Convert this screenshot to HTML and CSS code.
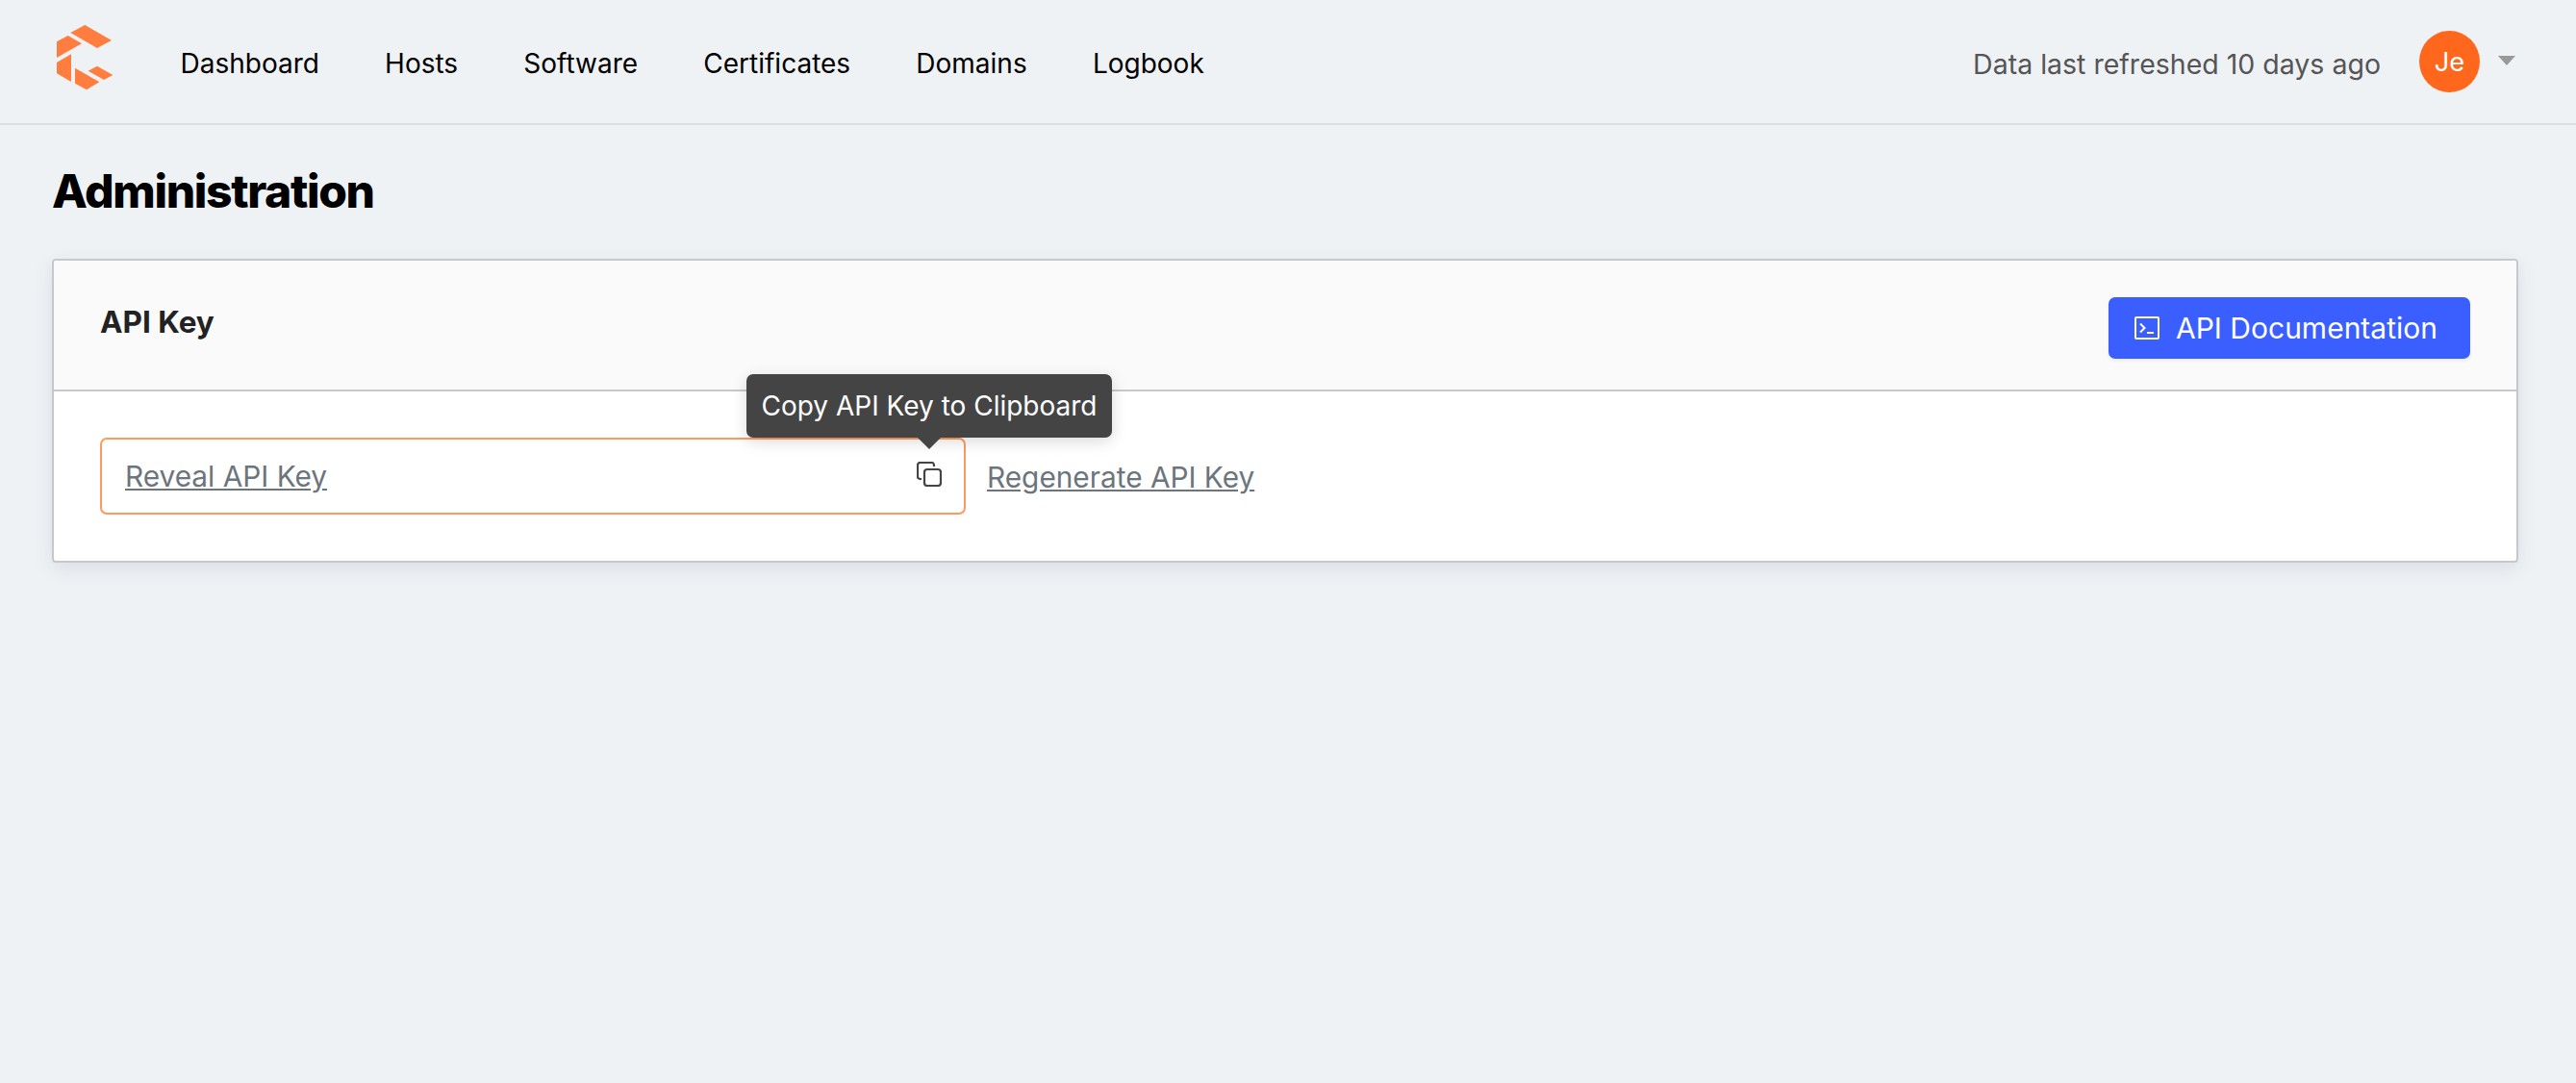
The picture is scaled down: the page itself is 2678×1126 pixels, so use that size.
FILE: index.html
```html
<!DOCTYPE html>
<html lang="en">
<head>
<meta charset="utf-8">
<title>Administration</title>
<link rel="stylesheet" href="styles.css">
</head>
<body>
<header class="topbar">
  <svg class="logo" viewBox="0 0 58.5 68" aria-hidden="true">
    <polygon points="29.3,0 57,16 42,24 14.3,8"/>
    <polygon points="0,17.3 11.7,11 26,19.3 0,34"/>
    <polygon points="15,30.3 15,59 0,50.3 0,39"/>
    <polygon points="19,44.7 44.3,59.3 31,67.3 19,60.7"/>
    <polygon points="42,42.7 58.3,52 49,57 32.7,47.7"/>
  </svg>
  <nav class="nav">
    <a class="nav-link">Dashboard</a>
    <a class="nav-link">Hosts</a>
    <a class="nav-link">Software</a>
    <a class="nav-link">Certificates</a>
    <a class="nav-link">Domains</a>
    <a class="nav-link">Logbook</a>
  </nav>
  <div class="status">
    <span class="refreshed">Data last refreshed 10 days ago</span>
    <span class="avatar">Je</span>
    <span class="caret"></span>
  </div>
</header>
<main class="page">
  <h1 class="page-title">Administration</h1>
  <section class="card">
    <div class="card-head">
      <h2 class="card-title">API Key</h2>
      <a class="btn">
        <svg class="btn-icon" viewBox="0 0 26 24" aria-hidden="true">
          <rect x="1" y="1" width="24" height="22" rx="1" fill="none" stroke="#fff" stroke-width="2"/>
          <path d="M6 7.5l4.500 4.500L6 16.500" fill="none" stroke="#fff" stroke-width="2"/>
          <path d="M13 17h7" fill="none" stroke="#fff" stroke-width="2"/>
        </svg>
        API Documentation
      </a>
    </div>
    <div class="card-body">
      <div class="key-field">
        <a class="link">Reveal API Key</a>
        <svg class="copy-icon" viewBox="0 0 26 26" aria-hidden="true">
          <rect x="8" y="8" width="17" height="17" rx="3" fill="none" stroke="#444" stroke-width="2.200"/>
          <path d="M5 18H3.500A2.500 2.500 0 0 1 1 15.500V3.500A2.500 2.500 0 0 1 3.500 1H15.500A2.500 2.500 0 0 1 18 3.500V5" fill="none" stroke="#444" stroke-width="2.200"/>
        </svg>
        <div class="tooltip">Copy API Key to Clipboard</div>
      </div>
      <a class="link link-side">Regenerate API Key</a>
    </div>
  </section>
</main>
</body>
</html>
```
FILE: styles.css
```css
* { box-sizing: border-box; }
html, body { margin: 0; height: 100%; }
body {
  background: #eff2f5;
  font-family: Inter, "Liberation Sans", sans-serif;
  font-size: 28px;
  color: #000;
  overflow: hidden;
}
.topbar {
  display: flex;
  align-items: center;
  height: 130px;
  padding: 0 63px 0 59px;
  border-bottom: 2px solid #dcdddf;
}
.logo { width: 58.5px; height: 68px; fill: #ff7d3f; flex: none; margin-top: -8px; }
.nav { display: flex; gap: 68.2px; margin-left: 70px; }
.nav-link { color: #000; line-height: 1; margin-top: 4px; }
.status { display: flex; align-items: center; margin-left: auto; }
.refreshed { color: #555; margin-top: 4px; font-size: 28.5px; }
.avatar {
  display: flex;
  align-items: center;
  justify-content: center;
  width: 63px;
  height: 64px;
  margin-left: 40px;
  border-radius: 50%;
  background: #ff671d;
  color: #fff;
  font-size: 27.3px;
}
.caret {
  width: 0;
  height: 0;
  margin: -3px 0 0 19px;
  border-left: 9px solid transparent;
  border-right: 9px solid transparent;
  border-top: 10px solid #999;
}
.page { padding: 0 60px 0 54px; }
.page-title {
  margin: 0;
  padding-top: 40px;
  height: 141px;
  font-size: 48px;
  line-height: 58px;
  font-weight: 800;
  letter-spacing: -1.35px;
}
.card {
  border: 2px solid #c5c8cc;
  border-radius: 4px;
  background: #fff;
  box-shadow: 0 6px 20px rgba(40, 50, 70, 0.1);
  margin-top: -2px;
}
.card-head {
  display: flex;
  justify-content: space-between;
  align-items: flex-start;
  height: 136px;
  padding: 38px 48px 0 48px;
  background: #fafafa;
  border-bottom: 2px solid #c5c8cc;
  border-radius: 2px 2px 0 0;
}
.card-title {
  margin: 0;
  padding-top: 9px;
  font-size: 31.500px;
  line-height: 34px;
  font-weight: 700;
  color: #222;
}
.btn {
  display: flex;
  align-items: center;
  gap: 17px;
  width: 376px;
  height: 64px;
  padding-left: 27px;
  border-radius: 7px;
  background: #3a5eff;
  color: #fff;
  font-size: 30px;
  box-shadow: 0 2px 4px rgba(0, 0, 0, 0.06);
}
.btn-icon { width: 26px; height: 24px; flex: none; }
.card-body {
  display: flex;
  align-items: center;
  gap: 22px;
  padding: 48px 48px;
}
.key-field {
  position: relative;
  display: flex;
  align-items: center;
  justify-content: space-between;
  width: 900px;
  height: 80px;
  padding: 0 23px 0 24px;
  border: 2px solid #ff9a5f;
  border-radius: 7px;
}
.link { color: #6c757d; text-decoration: underline; font-size: 29.800px; }
.link-side { margin-top: 2px; }
.copy-icon { width: 26px; height: 26px; margin-top: -5px; }
.tooltip {
  position: absolute;
  top: -68px;
  right: -154px;
  width: 380px;
  height: 66px;
  display: flex;
  align-items: center;
  justify-content: center;
  border-radius: 7px;
  background: #444;
  color: #fff;
  box-shadow: 0 4px 16px rgba(0, 0, 0, 0.15);
  white-space: nowrap;
}
.tooltip::after {
  content: "";
  position: absolute;
  left: 178px;
  top: 66px;
  border-left: 12px solid transparent;
  border-right: 12px solid transparent;
  border-top: 12px solid #444;
}
```
